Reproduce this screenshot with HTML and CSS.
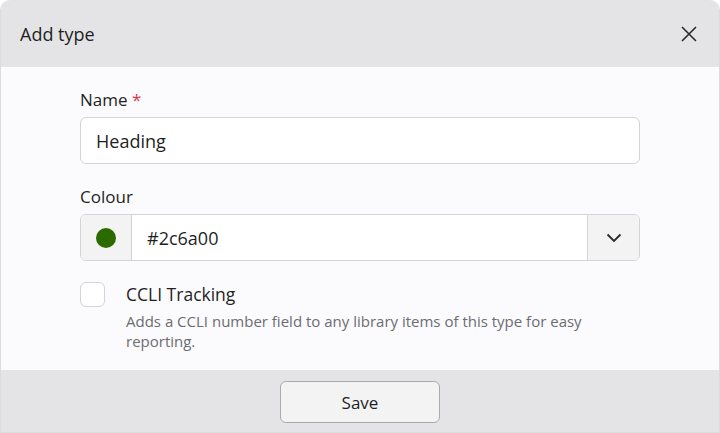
FILE: index.html
```html
<!DOCTYPE html>
<html>
<head>
<meta charset="utf-8">
<link rel="stylesheet" href="styles.css">
</head>
<body>
<div class="dialog">
  <div class="header">
    <span class="title">Add type</span>
    <button class="close" aria-label="Close">
      <svg width="16" height="16" viewBox="0 0 16 16"><path d="M1 1 L15 15 M15 1 L1 15" stroke="#2a2a2e" stroke-width="1.6" fill="none"/></svg>
    </button>
  </div>
  <div class="body">
    <div class="field field-first">
      <label class="label">Name <span class="req">*</span></label>
      <div class="input">Heading</div>
    </div>
    <div class="field">
      <label class="label">Colour</label>
      <div class="group">
        <div class="addon swatch"><span class="dot"></span></div>
        <div class="value">#2c6a00</div>
        <div class="addon chevron">
          <svg width="16" height="10" viewBox="0 0 16 10"><path d="M1.5 1.5 L8 8 L14.5 1.5" stroke="#2a2a2e" stroke-width="1.8" fill="none"/></svg>
        </div>
      </div>
    </div>
    <div class="check">
      <span class="box"></span>
      <div class="check-text">
        <div class="check-label">CCLI Tracking</div>
        <div class="hint">Adds a CCLI number field to any library items of this type for easy reporting.</div>
      </div>
    </div>
  </div>
  <div class="footer">
    <button class="save">Save</button>
  </div>
</div>
</body>
</html>
```

FILE: styles.css
```css
* { box-sizing: border-box; }
html, body { margin: 0; padding: 0; background: #ffffff; }
body {
  font-family: "Open Sans", "Noto Sans", sans-serif;
  color: #1f1f24;
  width: 720px;
  height: 433px;
}
.dialog {
  width: 720px;
  height: 433px;
  display: flex;
  flex-direction: column;
  border-radius: 10px 10px 0 0;
  overflow: hidden;
  border: 1px solid #dcdce0;
  border-top: none;
}
.header {
  height: 67px;
  background: #e4e4e6;
  display: flex;
  align-items: center;
  justify-content: space-between;
  padding: 0 22px 0 19px;
  flex-shrink: 0;
}
.title { font-size: 18px; }
.close {
  border: none;
  background: none;
  padding: 0;
  width: 16px;
  height: 16px;
  display: flex;
}
.body {
  flex: 1;
  background: #fbfbfd;
  padding: 20px 79px 0 79px;
  display: flex;
  flex-direction: column;
}
.field { display: flex; flex-direction: column; margin-bottom: 21px; }
.field-first { margin-bottom: 20px; }
.label { font-size: 17px; line-height: 26px; margin-bottom: 4px; }
.req { color: #e0354b; }
.input {
  height: 47px;
  border: 1px solid #d3d3d8;
  border-radius: 6px;
  background: #ffffff;
  display: flex;
  align-items: center;
  padding-left: 15px;
  font-size: 18px;
}
.group {
  height: 47px;
  border: 1px solid #d3d3d8;
  border-radius: 6px;
  background: #ffffff;
  display: flex;
  overflow: hidden;
}
.addon {
  background: #f3f3f4;
  display: flex;
  align-items: center;
  justify-content: center;
}
.swatch { width: 51px; border-right: 1px solid #d3d3d8; }
.dot { width: 20px; height: 20px; border-radius: 50%; background: #2c6a00; }
.value {
  flex: 1;
  display: flex;
  align-items: center;
  padding-left: 15px;
  font-size: 18px;
}
.chevron { width: 52px; border-left: 1px solid #d3d3d8; }
.check { display: flex; gap: 21px; margin-top: -1px; }
.box {
  width: 25px;
  height: 25px;
  border: 1px solid #d3d3d8;
  border-radius: 6px;
  background: #ffffff;
  flex-shrink: 0;
  margin-top: 1px;
}
.check-label { font-size: 17.5px; line-height: 26px; }
.hint {
  font-size: 15px;
  line-height: 20px;
  color: #6c6c73;
  margin-top: 4px;
  padding-right: 40px;
}
.footer {
  height: 62px;
  background: #e4e4e6;
  display: flex;
  align-items: center;
  justify-content: center;
  flex-shrink: 0;
  padding-top: 2px;
}
.save {
  width: 160px;
  height: 42px;
  border: 1px solid #a9a9ae;
  border-radius: 6px;
  background: #f3f3f4;
  font-family: inherit;
  font-size: 17px;
  color: #1f1f24;
}
```
